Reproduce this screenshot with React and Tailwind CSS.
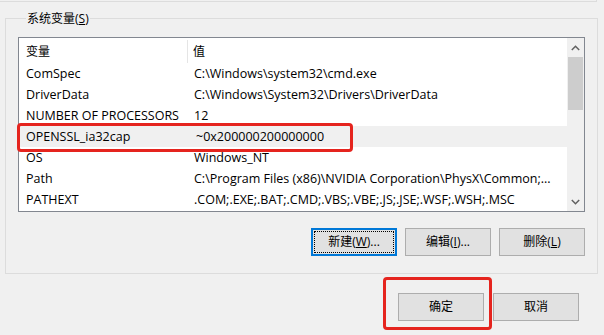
import React from "react";

const FONT = { fontFamily: "'Open Sans', 'Noto Sans CJK SC', sans-serif" };

const rows = [
  ["ComSpec", "C:\\Windows\\system32\\cmd.exe"],
  ["DriverData", "C:\\Windows\\System32\\Drivers\\DriverData"],
  ["NUMBER OF PROCESSORS", "12"],
  ["OPENSSL_ia32cap", "~0x200000200000000", true],
  ["OS", "Windows_NT"],
  ["Path", "C:\\Program Files (x86)\\NVIDIA Corporation\\PhysX\\Common;..."],
  ["PATHEXT", ".COM;.EXE;.BAT;.CMD;.VBS;.VBE;.JS;.JSE;.WSF;.WSH;.MSC"],
];

function Btn({ children, focused, className = "" }) {
  return (
    <div
      className={
        "h-[28px] w-[86px] flex items-center justify-center text-[12px] text-black bg-[#e1e1e1] " +
        (focused ? "border-2 border-[#0078d7] p-[1px] " : "border border-[#adadad] ") +
        className
      }
    >
      {focused ? (
        <div className="w-full h-full flex items-center justify-center border border-dotted border-black">
          {children}
        </div>
      ) : (
        children
      )}
    </div>
  );
}

export default function App() {
  return (
    <div className="w-[604px] h-[335px] bg-[#f0f0f0] overflow-hidden flex flex-col" style={FONT}>
      <div className="w-[597px] h-[2px] border-b border-r border-[#dcdcdc] shrink-0" />
      <fieldset className="ml-[5px] mt-[8px] w-[592px] h-[264px] border border-[#dcdcdc] px-[12px] shrink-0">
        <legend className="ml-[8px] px-[1px] text-[12px] leading-[17px] text-black">
          系统变量(<span className="underline">S</span>)
        </legend>
        <div className="mt-[10px] w-[567px] h-[175px] border border-[#828790] bg-white flex">
          <div className="flex-1 flex flex-col">
            <div className="h-[25px] pt-[2px] flex items-center text-[12px] text-black shrink-0">
              <div className="w-[169px] h-full pl-[7px] flex items-center border-r border-[#e5e5e5]">变量</div>
              <div className="pl-[5px]">值</div>
            </div>
            {rows.map(([k, v, sel]) => (
              <div
                key={k}
                className={"h-[21px] pt-[2px] flex items-center text-[12.5px] text-black whitespace-nowrap " + (sel ? "bg-[#f0f0f0]" : "")}
              >
                <div className="w-[169px] pl-[7px]">{k}</div>
                <div className={sel ? "pl-[8px]" : "pl-[6px]"}>{v}</div>
              </div>
            ))}
          </div>
          <div className="w-[17px] bg-[#f0f0f0] flex flex-col items-center shrink-0">
            <div className="h-[19px] w-full flex items-center justify-center">
              <svg width="9" height="6" viewBox="0 0 9 6">
                <path d="M0.8 5 L4.5 1.3 L8.2 5" fill="none" stroke="#606060" strokeWidth="1.5" />
              </svg>
            </div>
            <div className="w-[15px] h-[53px] bg-[#cdcdcd]" />
            <div className="flex-1" />
            <div className="h-[19px] w-full flex items-center justify-center">
              <svg width="9" height="6" viewBox="0 0 9 6">
                <path d="M0.8 1 L4.5 4.7 L8.2 1" fill="none" stroke="#606060" strokeWidth="1.5" />
              </svg>
            </div>
          </div>
        </div>
        <div className="mt-[16px] w-[567px] flex justify-end gap-[8px]">
          <Btn focused>
            新建(<span className="underline">W</span>)...
          </Btn>
          <Btn>
            编辑(<span className="underline">I</span>)...
          </Btn>
          <Btn>
            删除(<span className="underline">L</span>)
          </Btn>
        </div>
      </fieldset>
      <div className="mt-[19px] w-[579px] flex justify-end gap-[9px]">
        <div className="relative">
          <Btn>确定</Btn>
          <div className="absolute left-[-15px] top-[-16px] w-[109px] h-[53px] border-[3px] border-[#e5241e] rounded-[4px]" />
        </div>
        <Btn>取消</Btn>
      </div>
      <div className="absolute left-[17px] top-[123px] w-[336px] h-[29px] border-[3px] border-[#e5241e] rounded-[4px]" />
    </div>
  );
}
